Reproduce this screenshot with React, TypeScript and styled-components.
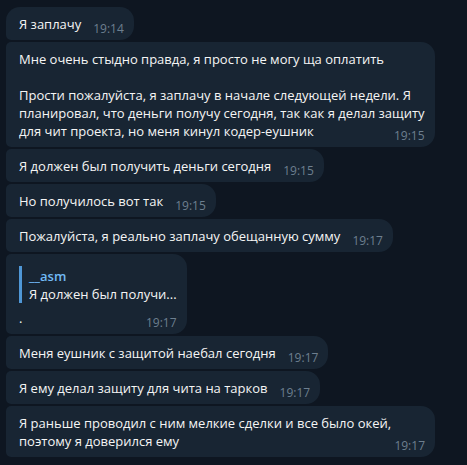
import styled, { createGlobalStyle } from 'styled-components';

type Message = {
    text: string;
    time: string;
    wide?: boolean;
    quote?: { author: string; text: string };
};

const messages: Message[] = [
    { text: 'Я заплачу', time: '19:14' },
    {
        text:
            'Мне очень стыдно правда, я просто не могу ща оплатить\n\n' +
            'Прости пожалуйста, я заплачу в начале следующей недели. Я\n' +
            'планировал, что деньги получу сегодня, так как я делал защиту\n' +
            'для чит проекта, но меня кинул кодер-еушник',
        time: '19:15',
    },
    { text: 'Я должен был получить деньги сегодня', time: '19:15' },
    { text: 'Но получилось вот так', time: '19:15' },
    { text: 'Пожалуйста, я реально заплачу обещанную сумму', time: '19:17' },
    {
        text: '.',
        time: '19:17',
        quote: { author: '__asm', text: 'Я должен был получи...' },
    },
    { text: 'Меня еушник с защитой наебал сегодня', time: '19:17' },
    { text: 'Я ему делал защиту для чита на тарков', time: '19:17' },
    {
        text: 'Я раньше проводил с ним мелкие сделки и все было окей,\nпоэтому я доверился ему',
        time: '19:17',
        wide: true,
    },
];

const GlobalStyle = createGlobalStyle`
    html, body {
        margin: 0;
        padding: 0;
        background: #0e1621;
    }
    body {
        font-family: "Open Sans", "Noto Sans", sans-serif;
        -webkit-font-smoothing: antialiased;
    }
`;

const StyledChat = styled.div`
    display: flex;
    flex-direction: column;
    align-items: flex-start;
    gap: 2px;
    padding: 7px 0 0 6px;
    min-height: 465px;
    box-sizing: border-box;
    background: #0e1621;
`;

const StyledBubble = styled.div<{ $first: boolean; $wide: boolean }>`
    width: ${props => (props.$wide ? '429px' : 'fit-content')};
    max-width: 440px;
    box-sizing: border-box;
    padding: 8px 10px 7px 13px;
    background: #182533;
    color: #f5f5f5;
    font-size: 13px;
    line-height: 18px;
    border-radius: ${props => (props.$first ? 14 : 5)}px 14px 14px 5px;
`;

const StyledText = styled.span`
    white-space: pre-line;
`;

const StyledTime = styled.span`
    float: right;
    position: relative;
    top: 5px;
    margin-left: 12px;
    font-size: 12px;
    line-height: 18px;
    color: #6d7f8f;
`;

const StyledQuote = styled.div`
    margin: 4px 0 6px;
    padding: 1px 0 0 7px;
    border-left: 3px solid #4f97d6;
`;

const StyledQuoteAuthor = styled.div`
    color: #71baf5;
    font-weight: 600;
    line-height: 18px;
`;

const StyledQuoteText = styled.div`
    line-height: 18px;
`;

const App = () => (
    <>
        <GlobalStyle />
        <StyledChat>
            {messages.map((message, index) => (
                <StyledBubble key={index} $first={index === 0} $wide={!!message.wide}>
                    {message.quote && (
                        <StyledQuote>
                            <StyledQuoteAuthor>{message.quote.author}</StyledQuoteAuthor>
                            <StyledQuoteText>{message.quote.text}</StyledQuoteText>
                        </StyledQuote>
                    )}
                    <StyledText>{message.text}</StyledText>
                    <StyledTime>{message.time}</StyledTime>
                </StyledBubble>
            ))}
        </StyledChat>
    </>
);

export default App;
